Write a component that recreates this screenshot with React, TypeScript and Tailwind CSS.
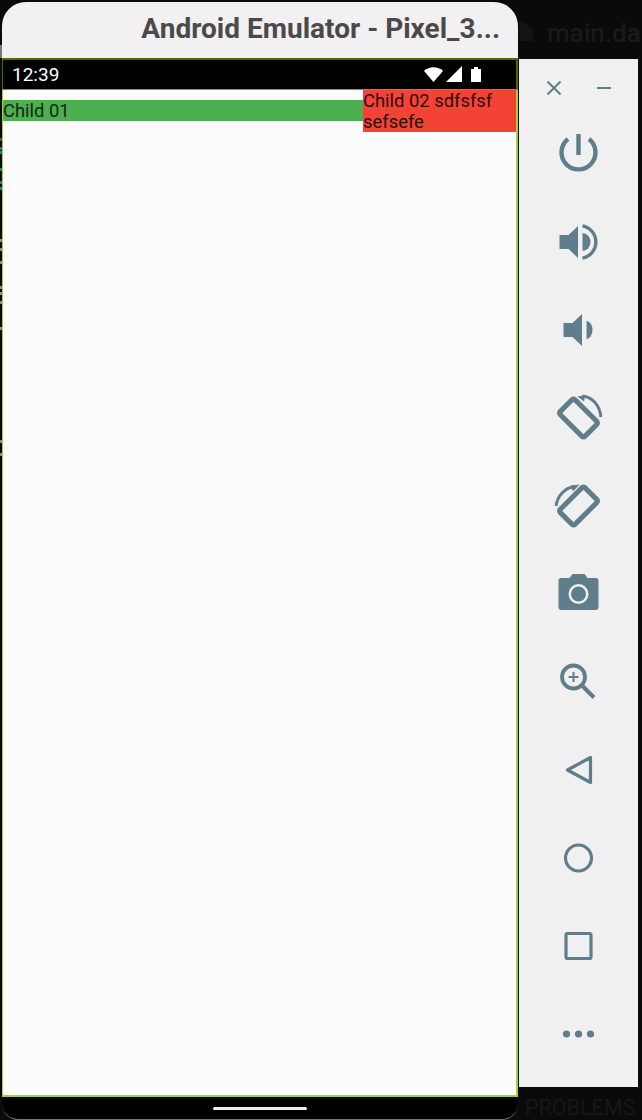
import React from "react";

const C = "#607d8b";

function Ico({ children }: { children: React.ReactNode }) {
  return (
    <svg width="48" height="48" viewBox="0 0 48 48" fill="none" className="-translate-x-[0.5px]">
      {children}
    </svg>
  );
}

const Power = () => (
  <Ico>
    <path d="M24 4V25" stroke={C} strokeWidth="4.4" />
    <path d="M13.5 9A17 17 0 1 0 34.5 9" stroke={C} strokeWidth="4.4" />
  </Ico>
);
const VolUp = () => (
  <Ico>
    <path d="M5 17H14L23.5 8V40L14 31H5Z" fill={C} />
    <path d="M28 15A8 9 0 0 1 28 33Z" fill={C} />
    <path d="M28 7.8A16.5 16.5 0 0 1 28 40.2" stroke={C} strokeWidth="3.4" />
  </Ico>
);
const VolDown = () => (
  <Ico>
    <path d="M9 17H18L27.5 8V40L18 31H9Z" fill={C} />
    <path d="M32 15A6 9 0 0 1 32 33Z" fill={C} />
  </Ico>
);
const RotRight = () => (
  <Ico>
    <rect x="6.5" y="13.5" width="35" height="21" rx="2" stroke={C} strokeWidth="5" transform="rotate(45 24 24)" />
    <path d="M28 2C37 3 45 10 46.5 23" stroke={C} strokeWidth="3" />
    <path d="M23 2.5L31 1L29.5 7.5Z" fill={C} />
  </Ico>
);
const RotLeft = () => (
  <Ico>
    <rect x="6.5" y="13.5" width="35" height="21" rx="2" stroke={C} strokeWidth="5" transform="rotate(-45 24 24)" />
    <path d="M1.5 24C3 14 10 6 20 4.5" stroke={C} strokeWidth="3" />
    <path d="M25 2.5L16 3.5L18.5 9.5Z" fill={C} />
  </Ico>
);
const Camera = () => (
  <Ico>
    <path
      d="M7 8H15L17 5.2C17.4 4.6 18 4 19 4H29C30 4 30.6 4.6 31 5.2L33 8H41C43 8 44 9 44 11V37C44 39 43 40 41 40H7C5 40 4 39 4 37V11C4 9 5 8 7 8Z"
      fill={C}
    />
    <circle cx="24" cy="24" r="10" fill="#f0f0f0" />
    <circle cx="24" cy="24" r="7.5" fill={C} />
  </Ico>
);
const ZoomIn = () => (
  <Ico>
    <circle cx="19" cy="19" r="11.5" stroke={C} strokeWidth="3.8" />
    <path d="M19 14V24M14 19H24" stroke={C} strokeWidth="2" />
    <path d="M28 28L39.5 39.5" stroke={C} strokeWidth="4" />
  </Ico>
);
const Back = () => (
  <Ico>
    <path d="M36 11.5V36.5L13 24Z" stroke={C} strokeWidth="3.2" strokeLinejoin="round" />
  </Ico>
);
const Home = () => (
  <Ico>
    <circle cx="24" cy="24" r="13" stroke={C} strokeWidth="3.2" />
  </Ico>
);
const Square = () => (
  <Ico>
    <rect x="11.5" y="11.5" width="25" height="25" rx="1.5" stroke={C} strokeWidth="3.2" />
  </Ico>
);
const More = () => (
  <Ico>
    <circle cx="12" cy="24" r="3.6" fill={C} />
    <circle cx="24" cy="24" r="3.6" fill={C} />
    <circle cx="36" cy="24" r="3.6" fill={C} />
  </Ico>
);

const tools = [Power, VolUp, VolDown, RotRight, RotLeft, Camera, ZoomIn, Back, Home, Square, More];

const flecks: [number, string][] = [
  [80, "#555555"],
  [6, "#22808a"],
  [1, "#22808a"],
  [14, "#22808a"],
  [10, "#22808a"],
  [3, "#22808a"],
  [49, "#8a8a8a"],
  [6, "#8a8a8a"],
  [10, "#8a8a8a"],
  [22, "#8a8a8a"],
  [3, "#8a8a8a"],
  [6, "#8a8a8a"],
  [23, "#8a8a8a"],
  [110, "#8a8a8a"],
  [10, "#8a8a8a"],
];

export default function App() {
  return (
    <div className="flex h-[1120px] w-[642px] overflow-hidden bg-[#0a0a0a] font-['Roboto',sans-serif]">
      {/* sliver of the desktop behind the window */}
      <div className="flex w-[2px] flex-col">
        <div className="mt-[45px] h-[13px] w-[2px] shrink-0 bg-[#777777]" />
        {flecks.map(([gap, color], i) => (
          <div key={i} className="h-[3px] w-[2px] shrink-0" style={{ marginTop: gap, backgroundColor: color }} />
        ))}
      </div>

      {/* emulator window */}
      <div className="flex w-[516px] flex-col pt-[2px]">
        <div className="flex h-[56px] items-center justify-end rounded-t-[24px] bg-[#f2f0f2] pb-[2px] pr-[18px]">
          <span className="text-[28px] font-bold leading-none text-[#4a4a4a]">Android Emulator - Pixel_3...</span>
        </div>
        <div className="h-[2px] bg-[#4d6b00]" />
        <div className="flex h-[30px] items-center justify-between border-b border-b-[#8a8a8a] border-l border-l-[#4d6b00] border-r-2 border-r-[#4d6b00] bg-black pl-[9px] pr-[34px]">
          <span className="text-[19px] leading-none text-white">12:39</span>
          <svg width="58" height="17" viewBox="0 0 58 17" fill="white">
            <path d="M0 5C5 0 14 0 19 5L9.5 16Z" />
            <path d="M22 16L38 0V16Z" />
            <path d="M47 3H50V1H54V3H57V16H47Z" />
          </svg>
        </div>
        <div className="h-[1007px] border-b-2 border-l border-r-2 border-[#a6d22c] bg-[#fcfcfc]">
          <div className="flex w-full items-start">
            <div className="mt-[10px] h-[21px] flex-1 bg-[#4caf50] text-[18.4px] leading-[21px] text-[#142814]">Child 01</div>
            <div className="h-[42px] w-[153px] bg-[#f44336] text-[18.4px] leading-[21px] text-[#2a0c0c]">Child 02 sdfsfsf sefsefe</div>
          </div>
        </div>
        <div className="flex h-[23px] items-start justify-center rounded-b-[16px] border-b border-b-[#777777] bg-black pt-[10px]">
          <div className="h-[3px] w-[94px] rounded-full bg-[#eeeeee]" />
        </div>
      </div>

      {/* right side */}
      <div className="flex w-[124px] flex-col">
        <div className="flex h-[59px] items-center overflow-hidden pt-[6px]">
          <svg width="16" height="24" viewBox="0 0 16 24" className="mr-[13px] shrink-0">
            <path d="M1 1H6L15 9V20H1Z" fill="#101517" />
          </svg>
          <span className="text-[26px] font-medium leading-none text-[#1a1a1a]">main.da</span>
        </div>
        <div className="ml-px flex h-[1028px] w-[119px] flex-col items-center bg-[#f0f0f0]">
          <div className="flex h-[51px] w-full items-center gap-[36px] pl-[28px] pt-[7px]">
            <svg width="14" height="14" viewBox="0 0 14 14">
              <path d="M0.5 0.5L13.5 13.5M13.5 0.5L0.5 13.5" stroke={C} strokeWidth="2" />
            </svg>
            <svg width="14" height="14" viewBox="0 0 14 14">
              <path d="M0 7H14" stroke={C} strokeWidth="2" />
            </svg>
          </div>
          {tools.map((T, i) => (
            <div key={i} className="flex h-[88px] w-full shrink-0 items-center justify-center">
              <T />
            </div>
          ))}
        </div>
        <div className="flex flex-1 items-center overflow-hidden pl-[7px] pt-[9px]">
          <span className="whitespace-nowrap text-[21.5px] leading-none text-[#171717]">PROBLEMS</span>
        </div>
      </div>
    </div>
  );
}
